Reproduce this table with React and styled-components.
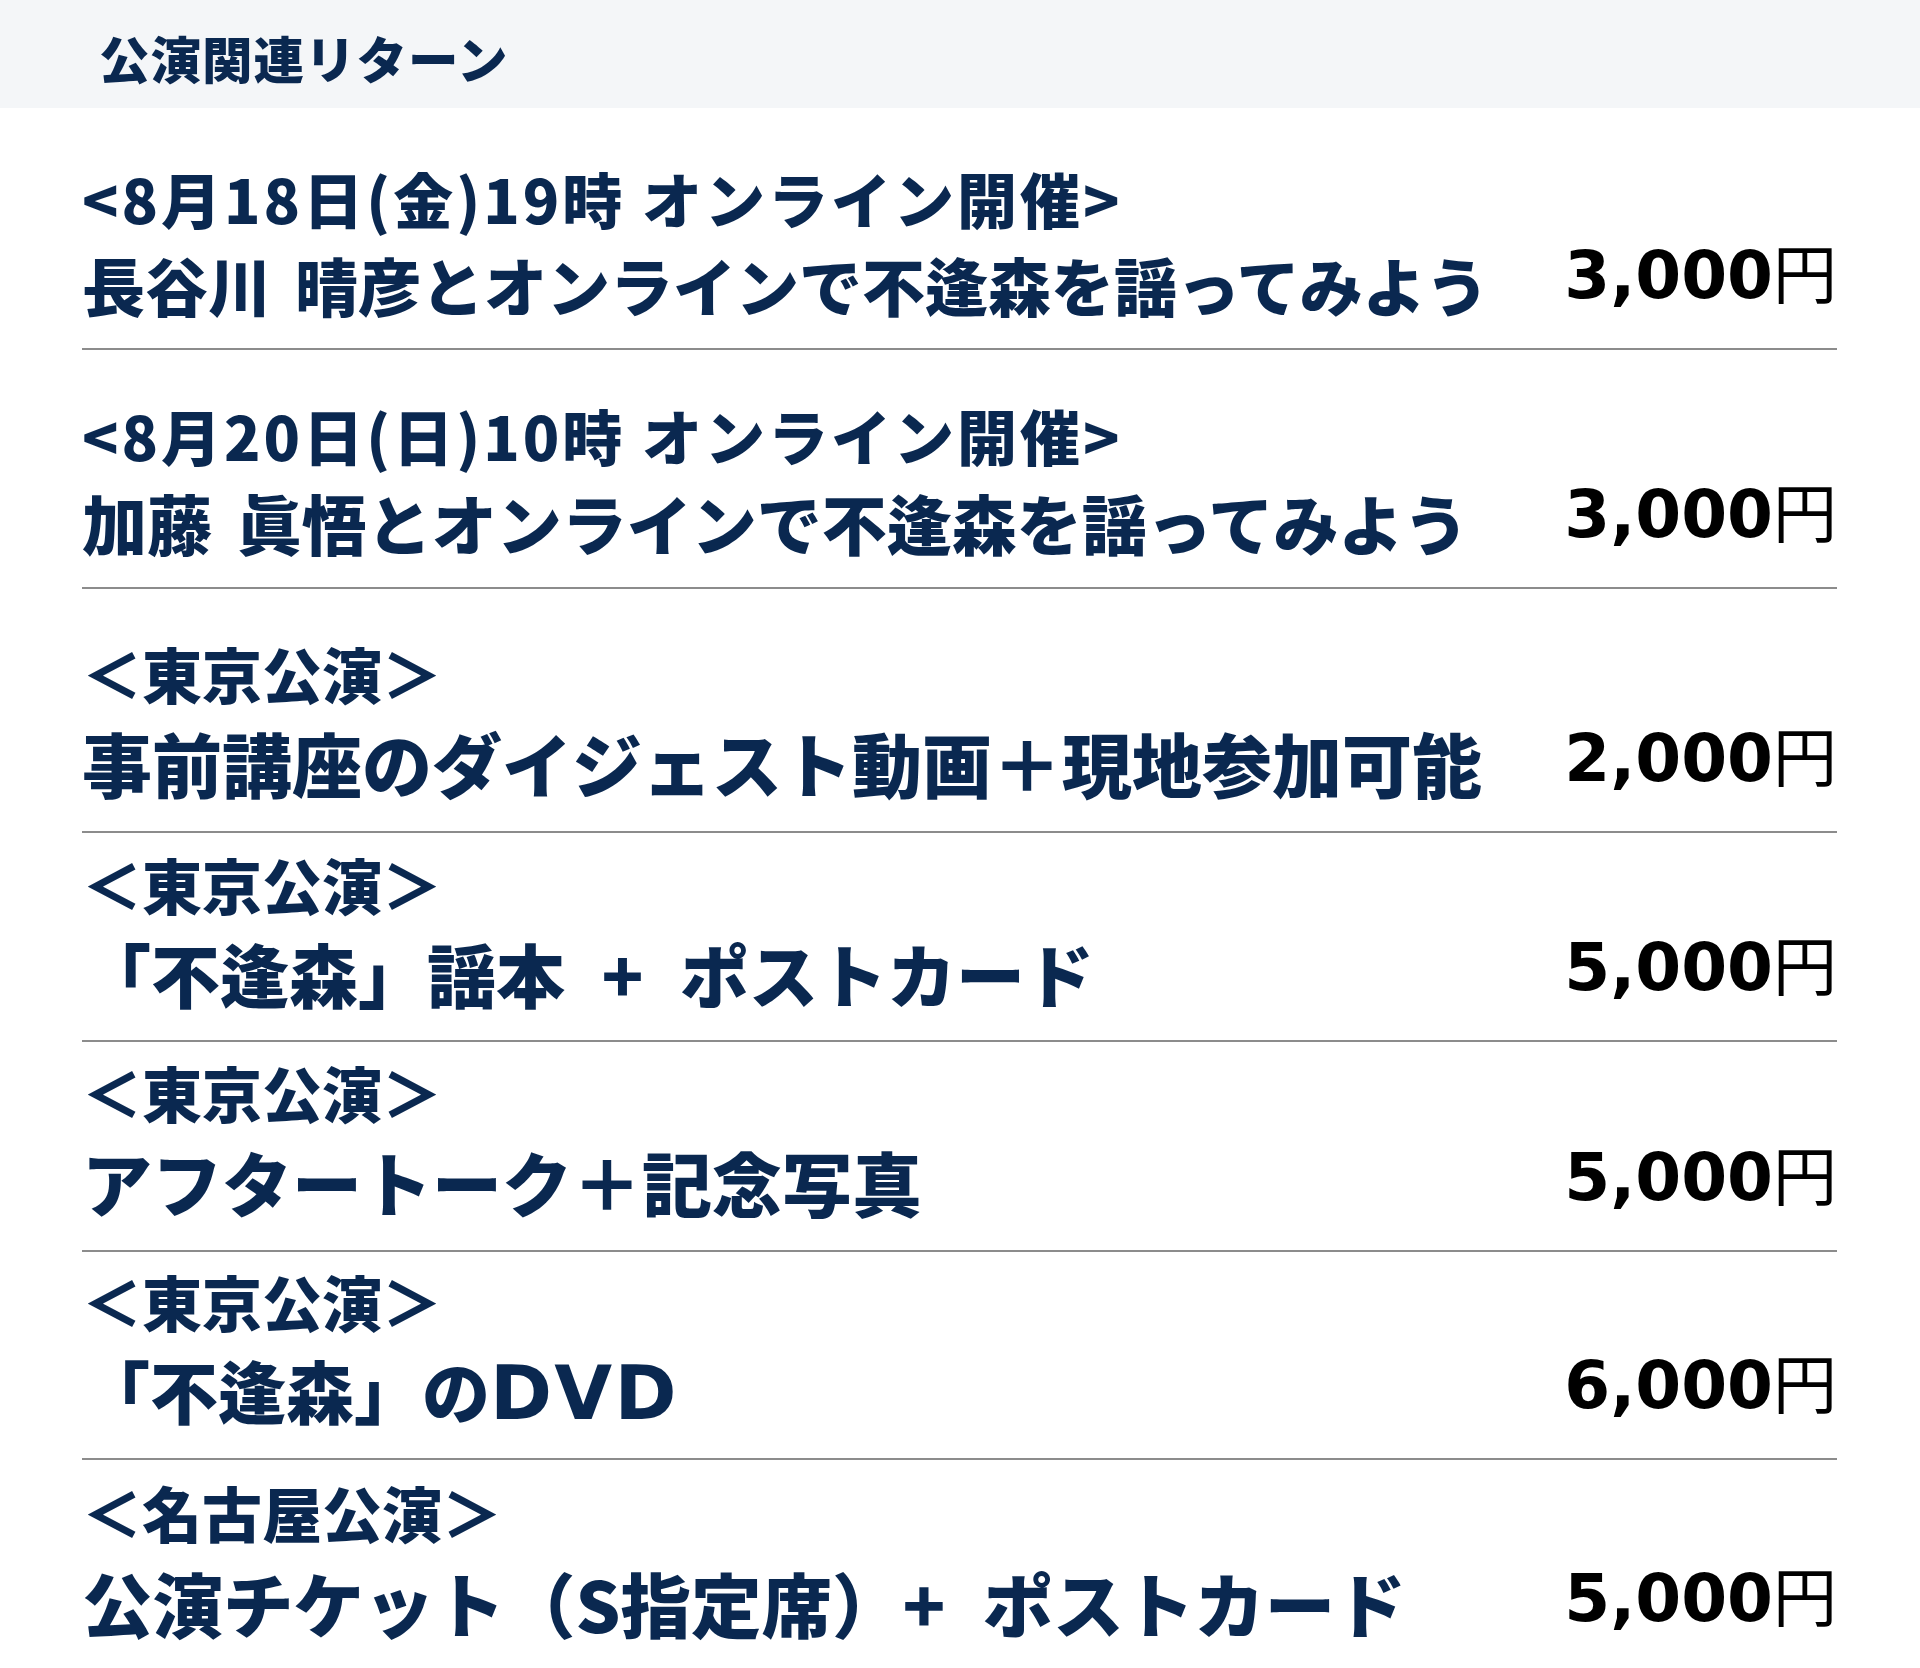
import React from 'react'
import styled, { createGlobalStyle } from 'styled-components'

const GlobalStyle = createGlobalStyle`
    body {
        margin: 0;
        background: #ffffff;
        font-family: "Noto Sans CJK JP", "Noto Sans", sans-serif;
    }
`

const Page = styled.div`
    width: 1920px;
`

const SectionHeader = styled.div`
    height: 108px;
    background: #f4f6f8;
    display: flex;
    align-items: center;
    padding: 6px 0 0 99px;
    box-sizing: border-box;

    h2 {
        margin: 0;
        font-size: 50.5px;
        font-weight: 900;
        color: #0a2850;
        letter-spacing: 1px;
    }
`

const List = styled.div`
    padding: 0 83px 0 82px;
`

const Item = styled.div`
    display: flex;
    align-items: flex-end;
    justify-content: space-between;
    padding: ${props => props.top}px 0 26px;
    border-bottom: 2px solid #8c8c8c;
`

const Titles = styled.div`
    display: flex;
    flex-direction: column;
    gap: 12px;
    color: #0a2850;
    font-weight: 900;
    white-space: pre;
`

const Tag = styled.div`
    font-size: 60px;
    line-height: 1.2;
    letter-spacing: ${props => props.spacing || 0}px;
`

const Name = styled.div`
    font-size: ${props => props.size}px;
    line-height: 1.2;
    word-spacing: ${props => props.wordSpacing || 0.15}em;
`

// the DVD letters are wider than the CJK font's Latin glyphs
const Wide = styled.span`
    font-family: "DejaVu Sans", sans-serif;
    font-size: 1.1em;
    line-height: 1;
    font-weight: 700;
    letter-spacing: 0.03em;
`

const Price = styled.div`
    margin-bottom: 13px;
    font-family: "DejaVu Sans", "Noto Sans CJK JP", sans-serif;
    font-size: 66px;
    line-height: 1;
    font-weight: 700;
    color: #000000;
    white-space: nowrap;

    span {
        font-family: "Noto Sans CJK JP", sans-serif;
        font-size: 64px;
        font-weight: 400;
    }
`

const returns = [
    { top: 54, tag: '<8月18日(金)19時 オンライン開催>', tagSpacing: 3, name: '長谷川 晴彦とオンラインで不逢森を謡ってみよう', size: 63, price: '3,000' },
    { top: 49, tag: '<8月20日(日)10時 オンライン開催>', tagSpacing: 3, name: '加藤 眞悟とオンラインで不逢森を謡ってみよう', size: 65, price: '3,000' },
    { top: 48, tag: '＜東京公演＞', name: '事前講座のダイジェスト動画＋現地参加可能', size: 70, price: '2,000' },
    { top: 15, tag: '＜東京公演＞', name: '「不逢森」謡本 + ポストカード', size: 69, wordSpacing: 0.3, price: '5,000' },
    { top: 14, tag: '＜東京公演＞', name: 'アフタートーク＋記念写真', size: 70, price: '5,000' },
    { top: 13, tag: '＜東京公演＞', name: <>「不逢森」の<Wide>DVD</Wide></>, size: 68, price: '6,000' },
    { top: 16, tag: '＜名古屋公演＞', name: '公演チケット（S指定席）+ ポストカード', size: 70.5, wordSpacing: 0.3, price: '5,000' },
]

export default function App() {
    return (
        <Page>
            <GlobalStyle />
            <SectionHeader>
                <h2>公演関連リターン</h2>
            </SectionHeader>

            <List>
                {returns.map((r, i) => (
                    <Item key={i} top={r.top}>
                        <Titles>
                            <Tag spacing={r.tagSpacing}>{r.tag}</Tag>
                            <Name size={r.size} wordSpacing={r.wordSpacing}>{r.name}</Name>
                        </Titles>
                        <Price>{r.price}<span>円</span></Price>
                    </Item>
                ))}
            </List>
        </Page>
    )
}
